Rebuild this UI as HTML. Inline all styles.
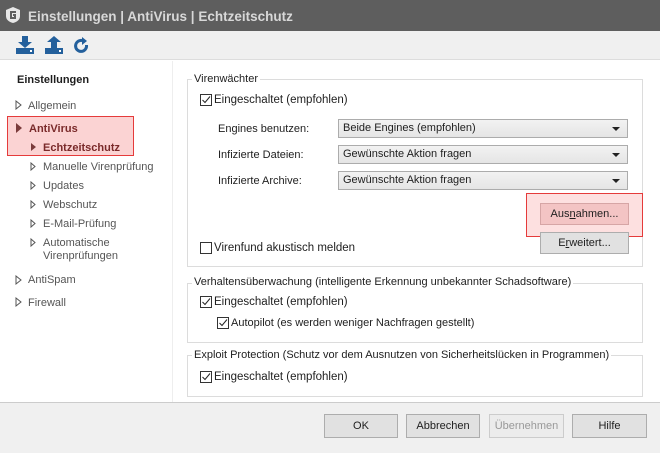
<!DOCTYPE html>
<html><head><meta charset="utf-8"><style>
*{margin:0;padding:0;box-sizing:border-box}
body{width:660px;height:453px;position:relative;overflow:hidden;background:#fff;font-family:"Liberation Sans",sans-serif;font-size:11px;color:#1e1e1e}
.a{position:absolute;white-space:nowrap}
.t{line-height:14px}
.cb{position:absolute;width:12px;height:12px;border:1px solid #333;background:#fff}
.cb svg{position:absolute;left:0;top:0}
.fs{position:absolute;border:1px solid #dcdcdc}
.lg{position:absolute;background:#fff;padding:0 2px;line-height:14px}
.sel{position:absolute;border:1px solid #acacac;background:linear-gradient(#f2f2f2,#e5e5e5);line-height:17px;padding-left:4px}
.sel:after{content:"";position:absolute;right:7px;top:7px;border-left:4px solid transparent;border-right:4px solid transparent;border-top:4px solid #222}
.btn{position:absolute;border:1px solid #adadad;background:#e1e1e1;text-align:center}
.nav{color:#555}
.tri{position:absolute;width:0;height:0;border-top:5px solid transparent;border-bottom:5px solid transparent;border-left:6px solid #666}
</style></head><body>
<div class="a" style="left:0;top:0;width:660px;height:31px;background:#5e5e5e"></div>
<svg class="a" style="left:5px;top:6px" width="16" height="18" viewBox="0 0 16 18"><path d="M8 1L15 4V10Q15 15 8 17Q1 15 1 10V4Z" fill="#e8e8e8"/><path d="M11 6H6V12H10V9H8" stroke="#5e5e5e" stroke-width="2" fill="none"/></svg>
<div class="a" style="left:28px;top:8px;color:#d8d8d8;font-size:13.5px;font-weight:bold;line-height:17px">Einstellungen | AntiVirus | Echtzeitschutz</div>
<div class="a" style="left:0;top:31px;width:660px;height:29px;background:#f0f0f0;border-bottom:1px solid #ddd"></div>
<svg class="a" style="left:14px;top:35px" width="80" height="20" viewBox="0 0 80 20"><g fill="#24609c"><rect x="2" y="13" width="18" height="6"/><path d="M8 1h6v6h4l-7 6-7-6h4z"/><rect x="31" y="13" width="18" height="6"/><path d="M37 13h6V7h4l-7-6-7 6h4z"/><path d="M68 4a7 7 0 1 0 6 6h-3a4 4 0 1 1-3-3v3l5-4-5-4z"/></g><g fill="#fff"><rect x="16" y="15" width="2" height="2"/><rect x="45" y="15" width="2" height="2"/></g></svg>
<div class="a" style="left:172px;top:61px;width:1px;height:342px;background:#eee"></div>
<div class="a t" style="left:17px;top:73px;font-weight:bold">Einstellungen</div>
<div class="a" style="left:7px;top:116px;width:127px;height:40px;background:#fbd3d3;border:1px solid #e53b3b"></div>
<svg class="a" style="left:15px;top:100px" width="8" height="10"><path d="M1 1L6 5L1 9Z" fill="none" stroke="#555"/></svg>
<div class="a t nav" style="left:28px;top:99px">Allgemein</div>
<div class="tri" style="left:16px;top:123px;border-left-color:#7a3b3b"></div>
<div class="a t" style="left:29px;top:122px;font-weight:bold;color:#7a2a2a">AntiVirus</div>
<div class="tri" style="left:31px;top:143px;border-left-color:#7a3b3b;border-top-width:4px;border-bottom-width:4px;border-left-width:5px"></div>
<div class="a t" style="left:43px;top:141px;font-weight:bold;color:#7a2a2a">Echtzeitschutz</div>
<svg class="a" style="left:30px;top:162px" width="8" height="100"><g fill="none" stroke="#555"><path d="M1 1L5 4.5L1 8Z"/><path d="M1 20L5 23.5L1 27Z"/><path d="M1 39L5 42.5L1 46Z"/><path d="M1 58L5 61.5L1 65Z"/><path d="M1 77L5 80.5L1 84Z"/></g></svg>
<div class="a t nav" style="left:43px;top:160px">Manuelle Virenprüfung</div>
<div class="a t nav" style="left:43px;top:179px">Updates</div>
<div class="a t nav" style="left:43px;top:198px">Webschutz</div>
<div class="a t nav" style="left:43px;top:217px">E-Mail-Prüfung</div>
<div class="a t nav" style="left:43px;top:236px">Automatische</div>
<div class="a t nav" style="left:43px;top:249px">Virenprüfungen</div>
<svg class="a" style="left:15px;top:275px" width="8" height="34"><g fill="none" stroke="#555"><path d="M1 1L6 5L1 9Z"/><path d="M1 23L6 27L1 31Z"/></g></svg>
<div class="a t nav" style="left:28px;top:273px">AntiSpam</div>
<div class="a t nav" style="left:28px;top:296px">Firewall</div>

<div class="fs" style="left:187px;top:79px;width:456px;height:188px"></div>
<div class="lg" style="left:192px;top:72px">Virenwächter</div>
<div class="cb" style="left:200px;top:94px"><svg width="10" height="10"><path d="M1.5 5L4 7.5L9 1.5" stroke="#222" fill="none"/></svg></div>
<div class="a t" style="left:214px;top:93px;font-size:11.5px">Eingeschaltet (empfohlen)</div>
<div class="a t" style="left:218px;top:122px">Engines benutzen:</div>
<div class="a t" style="left:218px;top:148px">Infizierte Dateien:</div>
<div class="a t" style="left:218px;top:174px">Infizierte Archive:</div>
<div class="sel" style="left:338px;top:119px;width:290px;height:19px">Beide Engines (empfohlen)</div>
<div class="sel" style="left:338px;top:145px;width:290px;height:19px">Gewünschte Aktion fragen</div>
<div class="sel" style="left:338px;top:171px;width:290px;height:19px">Gewünschte Aktion fragen</div>
<div class="a" style="left:526px;top:193px;width:117px;height:44px;background:#fde0e0;border:1px solid #e53b3b"></div>
<div class="btn" style="left:540px;top:203px;width:89px;height:22px;line-height:20px;background:#f3c4c4;border-color:#d6a5a5">Aus<u>n</u>ahmen...</div>
<div class="btn" style="left:540px;top:232px;width:89px;height:22px;line-height:20px">E<u>r</u>weitert...</div>
<div class="cb" style="left:200px;top:242px"></div>
<div class="a t" style="left:214px;top:241px;font-size:11.5px">Virenfund akustisch melden</div>

<div class="fs" style="left:187px;top:283px;width:456px;height:60px"></div>
<div class="lg" style="left:192px;top:275px">Verhaltensüberwachung (intelligente Erkennung unbekannter Schadsoftware)</div>
<div class="cb" style="left:200px;top:296px"><svg width="10" height="10"><path d="M1.5 5L4 7.5L9 1.5" stroke="#222" fill="none"/></svg></div>
<div class="a t" style="left:214px;top:295px;font-size:11.5px">Eingeschaltet (empfohlen)</div>
<div class="cb" style="left:217px;top:317px"><svg width="10" height="10"><path d="M1.5 5L4 7.5L9 1.5" stroke="#222" fill="none"/></svg></div>
<div class="a t" style="left:231px;top:316px">Autopilot (es werden weniger Nachfragen gestellt)</div>

<div class="fs" style="left:187px;top:355px;width:456px;height:42px"></div>
<div class="lg" style="left:192px;top:348px">Exploit Protection (Schutz vor dem Ausnutzen von Sicherheitslücken in Programmen)</div>
<div class="cb" style="left:200px;top:371px"><svg width="10" height="10"><path d="M1.5 5L4 7.5L9 1.5" stroke="#222" fill="none"/></svg></div>
<div class="a t" style="left:214px;top:370px;font-size:11.5px">Eingeschaltet (empfohlen)</div>

<div class="a" style="left:0;top:402px;width:660px;height:51px;background:#f0f0f0;border-top:1px solid #ccc"></div>
<div class="btn" style="left:324px;top:414px;width:74px;height:24px;line-height:22px">OK</div>
<div class="btn" style="left:406px;top:414px;width:74px;height:24px;line-height:22px">Abbrechen</div>
<div class="btn" style="left:489px;top:414px;width:75px;height:24px;line-height:22px;color:#999;border-color:#ccc;background:#ececec">Übernehmen</div>
<div class="btn" style="left:572px;top:414px;width:75px;height:24px;line-height:22px">Hilfe</div>
</body></html>
